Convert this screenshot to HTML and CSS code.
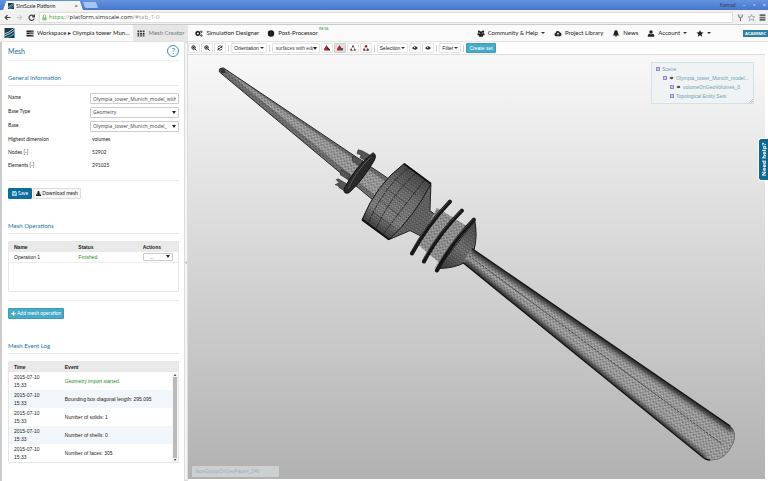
FILE: index.html
```html
<!DOCTYPE html>
<html lang="en">
<head>
<meta charset="utf-8">
<title>SimScale Platform</title>
<link rel="stylesheet" href="styles.css">
</head>
<body>
<svg width="0" height="0" class="defs" aria-hidden="true">
  <symbol id="logo" viewBox="0 0 12 12"><path fill="#173a4c" d="M0 0h12v12H0z"/><path d="M0 7Q5 6 12 0M0 9.500Q7 7 12 3" stroke="#e9f3f8" stroke-width="1" fill="none"/><path d="M1 12Q8 10 12 6.500" stroke="#3ba0cf" stroke-width="1.500" fill="none"/></symbol>
  <symbol id="zoom-in" viewBox="0 0 12 12"><circle cx="5" cy="5" r="3.500" fill="none" stroke="#222" stroke-width="2"/><path d="M8 8l3 3M3 5h4M5 3v4" stroke="#222" stroke-width="1.800"/></symbol>
  <symbol id="eye" viewBox="0 0 12 12"><path d="M0 6Q6-1 12 6Q6 13 0 6z" fill="#333"/><circle cx="5" cy="5" r="1.300" fill="#ddd"/></symbol>
  <symbol id="shape" viewBox="0 0 12 12"><path d="M6 1L1 11h10z" fill="none" stroke="#777" stroke-width="1"/><circle cx="6" cy="3" r="2" fill="#444"/><circle cx="2.500" cy="9.500" r="2" fill="#b22"/><circle cx="9.500" cy="9.500" r="2" fill="#555"/></symbol>
  <symbol id="shape-red" viewBox="0 0 12 12"><path d="M6 1L1 11h10z" fill="none" stroke="#777" stroke-width="1"/><circle cx="6" cy="2.500" r="2.500" fill="#c11f28"/><circle cx="2.500" cy="9.500" r="2.300" fill="#c11f28"/><circle cx="9.500" cy="9.500" r="2.300" fill="#444"/></symbol>
</svg>

<header class="browser">
  <div class="tabs">
    <div class="tab"><svg class="tab-logo"><use href="#logo"/></svg><span>SimScale Platform</span><button class="plain close" aria-label="Close tab">×</button></div>
    <div class="new-tab"></div>
    <div class="window"><span class="user">Konrad</span><span>–</span><span>▫</span><span>×</span></div>
  </div>
  <div class="address">
    <button class="plain" aria-label="Back"><svg viewBox="0 0 12 12"><path d="M11 6H2M6 2L2 6l4 4" fill="none" stroke="#444" stroke-width="2"/></svg></button>
    <button class="plain" aria-label="Forward"><svg viewBox="0 0 12 12"><path d="M1 6h9M6 2l4 4-4 4" fill="none" stroke="#ccc" stroke-width="2"/></svg></button>
    <button class="plain" aria-label="Reload"><svg viewBox="0 0 12 12"><path d="M10 4A4.500 4.500 0 1 0 10.500 8M11 1v4H7" fill="none" stroke="#444" stroke-width="2"/></svg></button>
    <div class="url"><svg class="lock" viewBox="0 0 8 12"><path d="M2 6V3.500Q2 1 4 1t2 2.500V6" fill="none" stroke="#6b5" stroke-width="1.300"/><path d="M0.500 5h7v6h-7z" fill="#8c7"/></svg><span><span class="secure">https</span><span class="dim">://</span>platform.simscale.com<span class="dim">/#tab_1-0</span></span></div>
    <svg viewBox="0 0 12 12"><path d="M3 1v3q0 2 3 2t3-2V1M6 6v6" fill="none" stroke="#777" stroke-width="2"/></svg>
    <svg viewBox="0 0 12 12"><path d="M6 1l1.500 3.500 4 .3-3 2.600 1 3.900L6 9.200l-3.500 2.100 1-3.900-3-2.600 4-.3z" fill="#fff" stroke="#777"/></svg>
    <svg viewBox="0 0 12 12"><path d="M1 2h10M1 6h10M1 10h10" stroke="#666" stroke-width="3"/></svg>
  </div>
</header>

<nav class="nav">
  <svg class="brand"><use href="#logo"/></svg>
  <a class="item workspace" href="#"><svg viewBox="0 0 12 12"><path d="M0 1h12v2.700H0zM0 4.700h12v2.700H0zM0 8.400h12v2.700H0z" fill="#222"/><path d="M7 2.400h4M5 6h6M8 9.700h3" stroke="#ccc" stroke-width=".7"/></svg>Workspace ▸ Olympia tower Mun...</a>
  <a class="item active" href="#"><svg viewBox="0 0 12 12"><path d="M0 1h3v3H0zM4.500 1h3v3h-3zM9 1h3v3H9zM0 5h3v3H0zM4.500 5h3v3h-3zM9 5h3v3H9zM0 9h3v2H0zM4.500 9h3v2h-3zM9 9h3v2H9z" fill="#333"/></svg>Mesh Creator</a>
  <a class="item" href="#"><svg viewBox="0 0 12 12"><circle cx="4" cy="6" r="3" fill="none" stroke="#111" stroke-width="2.400" /><circle cx="4" cy="6" r="3.800" fill="none" stroke="#111" stroke-width="1.200" stroke-dasharray="1.500 1.500"/><circle cx="10" cy="3" r="1.300" fill="none" stroke="#111" stroke-width="1.400"/><circle cx="10" cy="9.500" r="1.300" fill="none" stroke="#111" stroke-width="1.400"/></svg>Simulation Designer</a>
  <a class="item post" href="#"><svg viewBox="0 0 12 12"><circle cx="6" cy="6" r="5.500" fill="#181818"/><path d="M6 1v10M1 6h10" stroke="#444" stroke-width=".6"/></svg><span>Post-Processor</span><sup>BETA</sup></a>
  <span class="grow"></span>
  <a class="item" href="#"><svg viewBox="0 0 12 12"><circle cx="2.500" cy="3" r="2" fill="#222"/><circle cx="9.500" cy="3" r="2" fill="#222"/><circle cx="6" cy="4.500" r="2.300" fill="#222"/><path d="M0 9V6q2-1.500 3 0h6q1-1.500 3 0v3H9.500v2.500h-7V9z" fill="#222"/></svg>Community &amp; Help<i class="caret"></i></a>
  <a class="item" href="#"><svg viewBox="0 0 12 12"><path d="M2.500 10.500Q0 10 0 7.500T2 5Q2 1.500 5.500 1.500 8 1.500 9 4q3 .5 3 3.500 0 2.500-2.500 3z" fill="#222"/><path d="M6 9V5M4 7l2-2 2 2" stroke="#fff" stroke-width="1.200" fill="none"/></svg>Project Library</a>
  <a class="item" href="#"><svg viewBox="0 0 12 12"><path d="M6 0Q9.500 1 9.500 5 9.500 8 12 9.500H0Q2.500 8 2.500 5 2.500 1 6 0zM4 10h4q-2 3-4 0z" fill="#222"/></svg>News</a>
  <a class="item" href="#"><svg viewBox="0 0 12 12"><circle cx="6" cy="3.300" r="3" fill="#222"/><path d="M0.500 11.500V9q1-3 3-2.500l2.500 1 2.500-1q2-.5 3 2.500v2.500z" fill="#222"/></svg>Account<i class="caret"></i></a>
  <a class="item star" href="#" aria-label="Favourites"><svg viewBox="0 0 12 12"><path d="M6 0l1.800 4 4.200.4-3.200 2.800 1 4.300L6 9.200l-3.800 2.300 1-4.300L0 4.400 4.200 4z" fill="#222"/></svg><i class="caret"></i></a>
  <span class="academic">ACADEMIC</span>
</nav>

<main class="work">
  <aside class="panel">
    <div class="title"><h1>Mesh</h1><button class="help" aria-label="Help">?</button></div>
    <h2>General Information</h2>
    <form class="fields">
      <label for="name">Name</label><input id="name" type="text" value="Olympia_tower_Munich_model_with">
      <label for="btype">Base Type</label><span class="pick"><select id="btype"><option>Geometry</option></select></span>
      <label for="base">Base</label><span class="pick"><select id="base"><option>Olympia_tower_Munich_model_</option></select></span>
      <span>Highest dimension</span><span class="value">volumes</span>
      <span>Nodes [-]</span><span class="value">52902</span>
      <span>Elements [-]</span><span class="value">291025</span>
    </form>
    <div class="actions">
      <button class="btn primary"><svg viewBox="0 0 12 12"><path d="M1 1h8l2 2v8H1zM3 1v3h5V1M3 11V7h6v4" fill="none" stroke="#fff" stroke-width="1.500"/></svg>Save</button>
      <button class="btn"><svg viewBox="0 0 12 12"><path d="M4 0h4v4h3L6 9 1 4h3zM0 8h12v4H0z" fill="#222"/></svg>Download mesh</button>
    </div>
    <h2>Mesh Operations</h2>
    <div class="box ops">
      <table>
        <thead><tr><th>Name</th><th>Status</th><th>Actions</th></tr></thead>
        <tbody><tr><td>Operation 1</td><td class="ok">Finished</td><td><span class="pick mini"><select aria-label="Actions for Operation 1"><option>...</option></select></span></td></tr></tbody>
      </table>
    </div>
    <div class="actions add"><button class="btn info"><svg viewBox="0 0 12 12"><path d="M6 1v10M1 6h10" stroke="#fff" stroke-width="3"/></svg>Add mesh operation</button></div>
    <h2>Mesh Event Log</h2>
    <div class="box log">
      <table>
        <thead><tr><th>Time</th><th>Event</th></tr></thead>
        <tbody>
          <tr><td>2015-07-10<br>15:33</td><td class="ok">Geometry import started.</td></tr>
          <tr><td>2015-07-10<br>15:33</td><td>Bounding box diagonal length: 295.095</td></tr>
          <tr><td>2015-07-10<br>15:33</td><td>Number of solids: 1</td></tr>
          <tr><td>2015-07-10<br>15:33</td><td>Number of shells: 0</td></tr>
          <tr><td>2015-07-10<br>15:33</td><td>Number of faces: 305</td></tr>
        </tbody>
      </table>
      <div class="scroll"><span>▴</span><i></i><span>▾</span></div>
    </div>
  </aside>
  <div class="splitter"><span>‹</span></div>

  <section class="stage">
    <div class="toolbar">
      <button class="tool" aria-label="Zoom in"><svg><use href="#zoom-in"/></svg></button>
      <button class="tool" aria-label="Zoom out"><svg><use href="#zoom-in"/></svg></button>
      <button class="tool" aria-label="Refresh"><svg viewBox="0 0 12 12"><path d="M2 5q1-4 5-3l3 2M10 1v4H6M10 7q-1 4-5 3L2 8M2 11V7h4" fill="none" stroke="#333" stroke-width="1.700"/></svg></button>
      <i class="sep"></i>
      <button class="tool wide">Orientation<i class="caret"></i></button>
      <i class="sep"></i>
      <span class="pick render"><select aria-label="Render mode"><option>surfaces with edg</option></select></span>
      <button class="tool" aria-label="Volumes"><svg viewBox="0 0 12 12"><path d="M5 0l4 6-3 5H0V8z" fill="#c11f28"/><path d="M7 5l5 3v3H6z" fill="#333"/></svg></button>
      <button class="tool on" aria-label="Faces"><svg viewBox="0 0 12 12"><path d="M5 0l4 6-3 5H0V8z" fill="#c11f28"/><path d="M6 6h6v5H6z" fill="#555"/></svg></button>
      <button class="tool" aria-label="Edges"><svg><use href="#shape"/></svg></button>
      <button class="tool" aria-label="Nodes"><svg><use href="#shape-red"/></svg></button>
      <i class="sep"></i>
      <button class="tool wide">Selection<i class="caret"></i></button>
      <button class="tool" aria-label="Hide"><svg><use href="#eye"/></svg></button>
      <button class="tool" aria-label="Show"><svg><use href="#eye"/></svg></button>
      <i class="sep"></i>
      <button class="tool wide">Filter<i class="caret"></i></button>
      <i class="sep"></i>
      <button class="tool create">Create set</button>
    </div>
    <div class="viewport">
      <svg class="model" viewBox="188 54 577 425" preserveAspectRatio="xMidYMid meet" role="img" aria-label="Tower mesh">
        <defs>
          <pattern id="mesh" width="4" height="4" patternUnits="userSpaceOnUse" patternTransform="rotate(35)"><path d="M0 0h4M0 2h4M0 0l2 2 2-2M0 4l2-2 2 2" stroke="#222" stroke-width=".2" fill="none"/><path d="M-.5 0h1M1.500 2h1M3.500 0h1" stroke="#333" stroke-width=".8"/></pattern>
          <pattern id="dense" width="3" height="3" patternUnits="userSpaceOnUse" patternTransform="rotate(35)"><path d="M0 0h3M0 1.500h3M0 0l1.500 1.500L3 0M0 3l1.500-1.500L3 3" stroke="#222" stroke-width=".3" fill="none"/></pattern>
          <linearGradient id="drum" gradientUnits="userSpaceOnUse" x1="418" y1="173" x2="376" y2="230"><stop offset="0" stop-color="#555"/><stop offset=".35" stop-color="#8a8a8a"/><stop offset=".75" stop-color="#a0a0a0"/><stop offset="1" stop-color="#444"/></linearGradient>
          <linearGradient id="cone" gradientUnits="userSpaceOnUse" x1="476" y1="220" x2="438" y2="270"><stop offset="0" stop-color="#505050"/><stop offset=".5" stop-color="#8b8b8b"/><stop offset="1" stop-color="#3c3c3c"/></linearGradient>
          <filter id="soft" x="-20%" y="-20%" width="140%" height="140%"><feGaussianBlur stdDeviation="2"/></filter>
          <clipPath id="shaftClip"><path d="M472 248L731 426Q738 432 734 443Q726 461 711 460Q706 460 702 456L463 262z"/></clipPath>
        </defs>
        <path d="M223 67L390 179L376 202L219 71Q218 67 223 67z" fill="#7c7c7c"/>
        <path d="M226 70L388 183L378 197z" fill="#b0b0b0"/>
        <path d="M223 67L390 179L376 202L219 71Q218 67 223 67z" fill="url(#mesh)"/>
        <path d="M390 179L223 67Q218 67 219 71L376 202" fill="none" stroke="#2a2a2a" stroke-width="1"/>
        <path d="M219 67l5 1 1 4-4 0z" fill="#333"/>
        <g fill="#555" stroke="#2a2a2a" stroke-width=".6">
          <path d="M358 149l4 1 9 5-3 6-8-4 1-3-4-1zM353 155l10 5-4 5-7-5zM341 169l9 5-2 5-8-5zM338 178l10 6-2 7-7-4-1-2-3-1 4-2-3-3z"/>
        </g>
        <path d="M373 152Q377 154 374 160Q363 179 349 192Q343 194 344 188Q355 166 373 152z" fill="#292929" stroke="#111"/>
        <path d="M371 156Q356 170 348 188" fill="none" stroke="#666" stroke-width=".8"/>
        <path d="M431 184L430 210L439 217L420 235L410 230L389 239z" fill="#7a7a7a"/>
        <path d="M431 184L430 210L439 217L420 235L410 230L389 239z" fill="url(#dense)" stroke="#222"/>
        <path d="M404 163L431 183Q415 215 389 239L362 219Q376 184 404 163z" fill="url(#drum)"/>
        <path d="M404 163L431 183Q415 215 389 239L362 219Q376 184 404 163z" fill="url(#dense)" stroke="#151515"/>
        <path d="M409 167Q383 187 368 223M416 172Q391 195 376 228M425 179Q404 205 383 234" fill="none" stroke="#222" stroke-width=".8" stroke-dasharray="6 1"/>
        <path d="M394 178l22 16M386 188l22 16M379 199l22 17M372 211l22 16" stroke="#2c2c2c" stroke-width=".5"/>
        <path d="M362 219l27 20M404 163l27 20" stroke="#111" stroke-width="2"/>
        <path d="M437 207L474 230L444 266L418 244z" fill="#a6a6a6"/>
        <path d="M437 207L474 230L444 266L418 244z" fill="url(#mesh)"/>
        <path d="M475 220Q478 237 474 250L465 262Q454 268 438 268z" fill="url(#cone)"/>
        <path d="M475 220Q478 237 474 250L465 262Q454 268 438 268z" fill="url(#dense)" stroke="#222"/>
        <g stroke="#181818" stroke-width="4" stroke-linecap="round" fill="none">
          <path d="M450 201Q427 225 412 253"/><path d="M462 210Q438 234 424 261"/><path d="M474 219Q451 243 437 270"/>
        </g>
        <g stroke="#666" stroke-width=".6" fill="none"><path d="M449 201Q426 224 411 251M461 210Q437 233 423 259M473 219Q449 243 435 268"/></g>
        <g clip-path="url(#shaftClip)">
          <path d="M460 240h290v230H460z" fill="#b4b4b4"/>
          <path d="M472 248L735 429M463 262L705 460" stroke="#333" stroke-width="8" filter="url(#soft)"/>
          <path d="M460 240h290v230H460z" fill="url(#mesh)"/>
          <path d="M469 255L723 444" stroke="#333" stroke-width=".8" stroke-dasharray="3 1"/>
        </g>
        <path d="M731 426L472 248M463 262L702 456Q706 460 711 460" fill="none" stroke="#181818" stroke-width="1.400"/>
        <path d="M731 426Q738 432 734 443Q726 461 711 460" fill="none" stroke="#666" stroke-width=".8"/>
      </svg>
      <div class="tree">
        <ul>
          <li><i class="node"></i>Scene
            <ul>
              <li><i class="node"></i><svg><use href="#eye"/></svg>Olympia_tower_Munich_model...
                <ul>
                  <li><i class="node"></i><svg><use href="#eye"/></svg>volumeOnGeoVolumes_0</li>
                  <li><i class="node"></i>Topological Entity Sets</li>
                </ul>
              </li>
            </ul>
          </li>
        </ul>
        <svg class="grip" viewBox="0 0 4 4"><path d="M0 4L4 0M2 4l2-2" stroke="#999" stroke-width=".6"/></svg>
      </div>
      <div class="hint">faceGroupOnGeoFaces_240</div>
    </div>
  </section>
</main>
<button class="need">Need help?</button>
</body>
</html>
```

FILE: styles.css
```css
* { box-sizing: border-box; }
html, body { height: 100%; }
body { margin: 0; display: flex; flex-direction: column; overflow: hidden; background: #fff; color: #222; font: 6px/8px Lato, "Liberation Sans", sans-serif; position: relative; }
button, input, select { font: inherit; color: inherit; margin: 0; }
a { color: inherit; text-decoration: none; }
.defs { position: absolute; }
.plain { border: 0; padding: 0; background: none; display: flex; }

.tabs { height: 10px; background: linear-gradient(#6493df, #4876cb); display: flex; align-items: flex-end; }
.tab { width: 80px; height: 9px; margin-left: 3px; padding: 0 5px; display: flex; align-items: center; gap: 2px; background: #f4f4f4; clip-path: polygon(4% 0, 96% 0, 100% 100%, 0 100%); font: 5px/8px Lato, sans-serif; }
.tab-logo { width: 6px; height: 6px; flex: none; }
.close { margin-left: auto; font-size: 6px; }
.new-tab { width: 13px; height: 6px; margin: 0 0 2px 1px; background: #a5c4f1; transform: skewX(20deg); border-radius: 1px; }
.window { margin-left: auto; padding-right: 2px; display: flex; gap: 7px; color: #dce8ff; line-height: 10px; }
.window .user { color: #373d58; font-size: 5px; }
.address { height: 15px; padding: 0 2px 0 4px; display: flex; align-items: center; gap: 4px; background: #f1f1f1; border-bottom: 1px solid #ccc; }
.address svg { width: 7px; height: 7px; display: block; flex: none; }
.address .plain + .plain { margin-left: 1px; }
.url { flex: 1; height: 11px; padding-left: 2px; display: flex; align-items: center; gap: 2px; background: #fff; border: 1px solid #ddd; border-radius: 1px; font: 6px/9px "Open Sans", sans-serif; color: #222; }
.url .lock { width: 5px; height: 7px; }
.secure { color: #279a27; }
.dim { color: #999; }

.nav { height: 17px; flex: none; display: flex; align-items: stretch; background: #fafafa; border-bottom: 1px solid #e2e2e2; padding-left: 4px; }
.brand { width: 11px; height: 10px; align-self: center; margin-right: 7px; }
.item { display: flex; align-items: center; gap: 3px; padding: 0 4px; white-space: nowrap; }
.item svg { width: 8px; height: 7px; flex: none; }
.active { background: #e6e6e6; color: #777; margin-right: 3px; }
.post { position: relative; }
.item sup { position: absolute; left: 100%; top: 2px; margin-left: -3px; font-size: 4px; line-height: 4px; color: #3a9a3a; }
.grow { flex: 1; }
.nav .grow ~ .item { margin-right: 1px; }
.caret { border: 2px solid transparent; border-top-color: #333; border-bottom: 0; width: 0; height: 0; display: inline-block; }
.nav .grow ~ .star { margin-right: 28px; }
.academic { align-self: center; background: #2a7fa5; color: #fff; font: bold 4px/7px "Open Sans", sans-serif; padding: 0 2px; }

.work { flex: 1; min-height: 0; display: flex; }
.panel { width: 24%; flex: none; border-left: 2px solid #ccc; padding: 0 5px 0 6px; overflow: hidden; font-size: 5px; }
.title { display: flex; justify-content: space-between; align-items: center; height: 19px; border-bottom: 1px solid #ececec; }
h1, h2 { margin: 0; font-weight: 400; color: #1673a0; }
h1 { font-size: 7px; line-height: 10px; }
h2 { font-size: 6px; line-height: 9px; padding: 12px 0 3px; border-bottom: 1px solid #e8e8e8; }
.help { width: 12px; height: 12px; padding: 0; border: 1px solid #3a8fb7; border-radius: 50%; background: #fff; color: #1673a0; font: 7px/10px Lato, sans-serif; }
.fields { display: grid; grid-template-columns: 82px 1fr; grid-template-rows: repeat(3, 11px) repeat(3, 10px); row-gap: 3px; line-height: 9px; padding: 7px 0 9px; border-bottom: 1px solid #ececec; }
.fields input, .pick { border: 1px solid #ccc; border-radius: 1px; background: #fff; min-width: 0; width: 100%; height: 11px; padding: 0 2px; color: #444; }
.fields input, .fields select { font-family: "Open Sans", sans-serif; }
.pick { display: flex; align-items: center; position: relative; }
.pick select { appearance: none; border: 0; padding: 0; background: none; width: 100%; min-width: 0; height: 9px; line-height: 9px; outline: 0; }
.pick::after { content: ""; border: 2px solid transparent; border-top: 3px solid #222; border-bottom: 0; flex: none; width: 0; }
.value { padding-left: 2px; }
.actions { display: flex; gap: 1px; padding: 7px 0 10px; }
.btn { height: 11px; padding: 0 2px; display: flex; align-items: center; gap: 1px; border: 1px solid #ddd; border-radius: 1px; background: #f7f7f7; color: #222; line-height: 9px; white-space: nowrap; }
.btn svg { width: 5px; height: 5px; }
.primary { background: #0d6d9c; border-color: #0d6d9c; color: #fff; padding: 0 3px; }
.info { background: #47abc8; border-color: #3a9cba; color: #fff; }
.box { border: 1px solid #e6e6e6; border-radius: 1px; margin-top: 7px; position: relative; }
.ops { height: 51px; }
table { width: 100%; border-collapse: collapse; table-layout: fixed; font: 5px/8px "Liberation Sans", sans-serif; }
th, td { padding: 0 0 0 5px; text-align: left; height: 10px; white-space: nowrap; }
th { background: #e9e9e9; font-weight: 700; }
.ops th { width: 38%; }
.ops th:last-child { width: 24%; }
.ops td { border-bottom: 1px solid #eee; }
.ok { color: #189018; }
.mini { width: 30px; height: 8px; padding-left: 6px; }
.mini select { height: 6px; line-height: 6px; }
.add { border-top: 1px solid #ececec; margin-top: 8px; }
.log th:first-child { width: 30%; }
.log td { height: 18px; }
.log tbody tr:nth-child(even) { background: #f1f6fa; }
.scroll { position: absolute; top: 11px; right: 0; bottom: 0; width: 6px; background: #f4f4f4; display: flex; flex-direction: column; align-items: center; font-size: 4px; line-height: 4px; }
.scroll i { width: 4px; flex: 1; background: #bbb; }
.splitter { width: 4px; flex: none; background: #f5f5f5; border: 1px solid #ddd; display: flex; align-items: center; }

.stage { flex: 1; min-width: 0; display: flex; flex-direction: column; padding: 0 3px 2px 0; }
.toolbar { height: 12px; flex: none; display: flex; align-items: center; gap: 1px; font-family: "Liberation Sans", sans-serif; }
.tool { min-width: 12px; height: 10px; padding: 0 2px; border: 1px solid #e3e3e3; border-radius: 1px; background: #fff; display: flex; align-items: center; justify-content: center; gap: 1px; line-height: 8px; font-size: 5px; white-space: nowrap; }
.tool svg { width: 6px; height: 6px; flex: none; }
.on { background: #e2e2e2; border-color: #ccc; }
.sep { width: 1px; height: 7px; margin: 0 1px; background: #ccc; }
.render { width: 48px; height: 10px; padding: 0 2px 0 3px; border-color: #e3e3e3; font-size: 5px; }
.create { background: #47abc8; border-color: #3a9cba; color: #fff; }
.viewport { flex: 1; min-height: 0; position: relative; border-top: 1px solid #ddd; background: linear-gradient(#f8f8f8, #b1b1b1); }
.model { width: 100%; height: 100%; display: block; }
.tree { position: absolute; top: 7px; right: 11px; width: 103px; height: 42px; padding: 2px 4px; border: 1px solid #d3e2e6; background: #eff3f3; color: #6fa0b8; font: 5px/9px "Liberation Sans", sans-serif; white-space: nowrap; }
.tree ul { list-style: none; margin: 0; padding: 0; }
.tree ul ul { padding-left: 7px; }
.tree svg { width: 5px; height: 4px; margin-right: 2px; }
.tree .grip { position: absolute; right: 0; bottom: 0; width: 4px; margin: 0; }
.node { display: inline-block; width: 4px; height: 4px; margin-right: 2px; border: 1px solid #918bd2; background: #c9c5ee; }
.hint { position: absolute; left: 4px; bottom: 2px; width: 87px; height: 11px; padding: 0 3px; background: #ccd0d1; color: #9eb0b9; font: 5px/11px "Liberation Sans", sans-serif; }
.need { position: absolute; right: 0; top: 138px; width: 10px; height: 43px; padding: 0; border: 1px solid #fff; border-left: 0; border-radius: 0 3px 3px 0; background: #0f6890; color: #fff; writing-mode: vertical-rl; transform: rotate(180deg); font: bold 6px/8px "Open Sans", sans-serif; white-space: nowrap; }
```
